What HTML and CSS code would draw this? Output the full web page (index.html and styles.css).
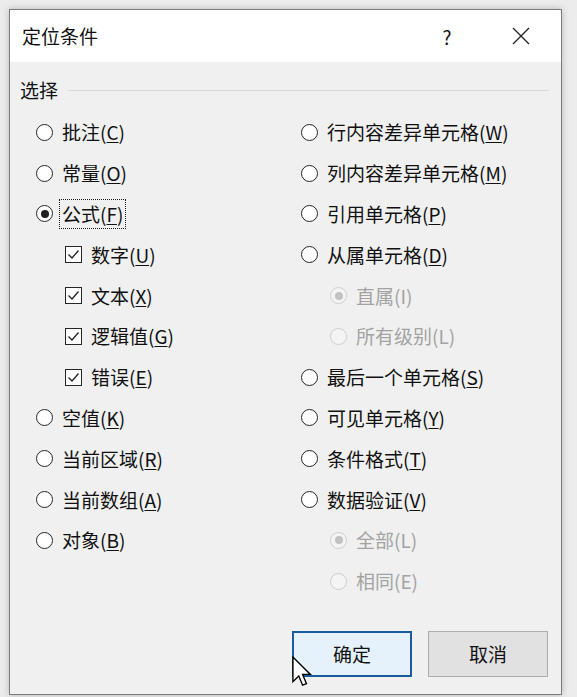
FILE: index.html
```html
<!DOCTYPE html>
<html lang="zh-CN">
<head>
<meta charset="utf-8">
<title>定位条件</title>
<link rel="stylesheet" href="styles.css">
</head>
<body>
<div class="window">
  <div class="titlebar">
    <span class="title">定位条件</span>
    <span class="help">?</span>
    <span class="close">
      <svg width="18" height="18" viewBox="0 0 18 18"><path d="M1 1 L17 17 M17 1 L1 17" stroke="#222" stroke-width="1.3" fill="none"/></svg>
    </span>
  </div>
  <div class="content">
    <div class="group-head"><span class="group-label">选择</span><div class="rule"></div></div>
    <div class="options">
      <div class="col">
        <div class="row"><span class="radio"></span><span class="label">批注(<u>C</u>)</span></div>
        <div class="row"><span class="radio"></span><span class="label">常量(<u>O</u>)</span></div>
        <div class="row"><span class="radio checked"></span><span class="label focus">公式(<u>F</u>)</span></div>
        <div class="row sub"><span class="check"><svg width="13" height="13" viewBox="0 0 13 13"><path d="M1.5 6.5 L5 10 L11.5 2.5" stroke="#222" stroke-width="1.3" fill="none"/></svg></span><span class="label">数字(<u>U</u>)</span></div>
        <div class="row sub"><span class="check"><svg width="13" height="13" viewBox="0 0 13 13"><path d="M1.5 6.5 L5 10 L11.5 2.5" stroke="#222" stroke-width="1.3" fill="none"/></svg></span><span class="label">文本(<u>X</u>)</span></div>
        <div class="row sub"><span class="check"><svg width="13" height="13" viewBox="0 0 13 13"><path d="M1.5 6.5 L5 10 L11.5 2.5" stroke="#222" stroke-width="1.3" fill="none"/></svg></span><span class="label">逻辑值(<u>G</u>)</span></div>
        <div class="row sub"><span class="check"><svg width="13" height="13" viewBox="0 0 13 13"><path d="M1.5 6.5 L5 10 L11.5 2.5" stroke="#222" stroke-width="1.3" fill="none"/></svg></span><span class="label">错误(<u>E</u>)</span></div>
        <div class="row"><span class="radio"></span><span class="label">空值(<u>K</u>)</span></div>
        <div class="row"><span class="radio"></span><span class="label">当前区域(<u>R</u>)</span></div>
        <div class="row"><span class="radio"></span><span class="label">当前数组(<u>A</u>)</span></div>
        <div class="row"><span class="radio"></span><span class="label">对象(<u>B</u>)</span></div>
      </div>
      <div class="col">
        <div class="row"><span class="radio"></span><span class="label">行内容差异单元格(<u>W</u>)</span></div>
        <div class="row"><span class="radio"></span><span class="label">列内容差异单元格(<u>M</u>)</span></div>
        <div class="row"><span class="radio"></span><span class="label">引用单元格(<u>P</u>)</span></div>
        <div class="row"><span class="radio"></span><span class="label">从属单元格(<u>D</u>)</span></div>
        <div class="row sub disabled"><span class="radio checked"></span><span class="label">直属(I)</span></div>
        <div class="row sub disabled"><span class="radio"></span><span class="label">所有级别(L)</span></div>
        <div class="row"><span class="radio"></span><span class="label">最后一个单元格(<u>S</u>)</span></div>
        <div class="row"><span class="radio"></span><span class="label">可见单元格(<u>Y</u>)</span></div>
        <div class="row"><span class="radio"></span><span class="label">条件格式(<u>T</u>)</span></div>
        <div class="row"><span class="radio"></span><span class="label">数据验证(<u>V</u>)</span></div>
        <div class="row sub disabled"><span class="radio checked"></span><span class="label">全部(L)</span></div>
        <div class="row sub disabled"><span class="radio"></span><span class="label">相同(E)</span></div>
      </div>
    </div>
    <div class="buttons">
      <button class="btn primary">确定</button>
      <button class="btn">取消</button>
    </div>
  </div>
  <svg class="cursor" width="20" height="31" viewBox="0 0 13 20"><path d="M0.6 0.6 L0.6 16.6 L4.4 12.9 L6.9 18.9 L9.4 17.9 L6.9 11.9 L12 11.9 Z" fill="#fff" stroke="#000" stroke-width="0.9" stroke-linejoin="miter"/></svg>
</div>
</body>
</html>
```

FILE: styles.css
```css
html, body {
  margin: 0;
  padding: 0;
}
body {
  background: #ececec;
  font-family: "Noto Sans CJK SC", "Microsoft YaHei", sans-serif;
  color: #111;
  width: 577px;
  height: 697px;
  overflow: hidden;
}
.window {
  position: relative;
  margin: 9px 0 0 9px;
  width: 551px;
  height: 684px;
  border: 1px solid #7b7b7b;
  background: #f0f0f0;
  box-shadow: 0 0 7px rgba(0, 0, 0, 0.22);
}
.titlebar {
  height: 52px;
  background: #fff;
  display: flex;
  align-items: center;
  padding-left: 12px;
  font-size: 19px;
}
.title {
  line-height: 24px;
  color: #111;
}
.help {
  margin-left: auto;
  width: 20px;
  text-align: center;
  font-size: 19px;
  color: #111;
}
.close {
  width: 20px;
  margin-left: 54px;
  margin-right: 30px;
  display: flex;
  align-items: center;
  justify-content: center;
}
.content {
  padding: 0 12px 0 10px;
}
.group-head {
  margin-top: 16px;
  height: 24px;
  display: flex;
  align-items: center;
}
.group-label {
  font-size: 19px;
  line-height: 24px;
}
.rule {
  flex: 1;
  margin-left: 10px;
  border-top: 1px solid #d9d9d9;
}
.options {
  margin-top: 10px;
  padding-left: 16px;
  display: grid;
  grid-template-columns: 265px 1fr;
}
.row {
  height: 40.8px;
  display: flex;
  align-items: center;
}
.row.sub {
  padding-left: 29px;
}
.radio {
  flex: none;
  box-sizing: border-box;
  width: 17px;
  height: 17px;
  border: 1.6px solid #262626;
  border-radius: 50%;
  background: #fff;
  margin-right: 6px;
  display: flex;
  align-items: center;
  justify-content: center;
}
.radio.checked::after {
  content: "";
  width: 8px;
  height: 8px;
  border-radius: 50%;
  background: #1f1f1f;
}
.check {
  flex: none;
  box-sizing: border-box;
  width: 17px;
  height: 17px;
  border: 1.4px solid #262626;
  background: #fff;
  margin-right: 6px;
  display: flex;
  align-items: center;
  justify-content: center;
}
.label {
  font-size: 19px;
  line-height: 24px;
  padding: 2px 2px;
  border: 1px dotted transparent;
  white-space: nowrap;
}
.label.focus {
  border-color: #1a1a1a;
}
.label u {
  text-underline-offset: 2px;
}
.disabled .label {
  color: #a3a3a3;
}
.disabled .radio {
  border-color: #cdcdcd;
  background: #f4f4f4;
}
.disabled .radio.checked::after {
  background: #c2c2c2;
}
.buttons {
  margin-top: 29px;
  margin-right: 1px;
  display: flex;
  justify-content: flex-end;
  gap: 16px;
}
.btn {
  box-sizing: border-box;
  width: 120px;
  height: 46px;
  font-family: "Noto Sans CJK SC", "Microsoft YaHei", sans-serif;
  font-size: 19px;
  color: #111;
  background: #e1e1e1;
  border: 1px solid #adadad;
  padding: 0;
}
.btn.primary {
  background: #e5f1fb;
  border: 2px solid #1a5b9c;
}
.cursor {
  position: absolute;
  left: 282px;
  top: 646px;
}
```
